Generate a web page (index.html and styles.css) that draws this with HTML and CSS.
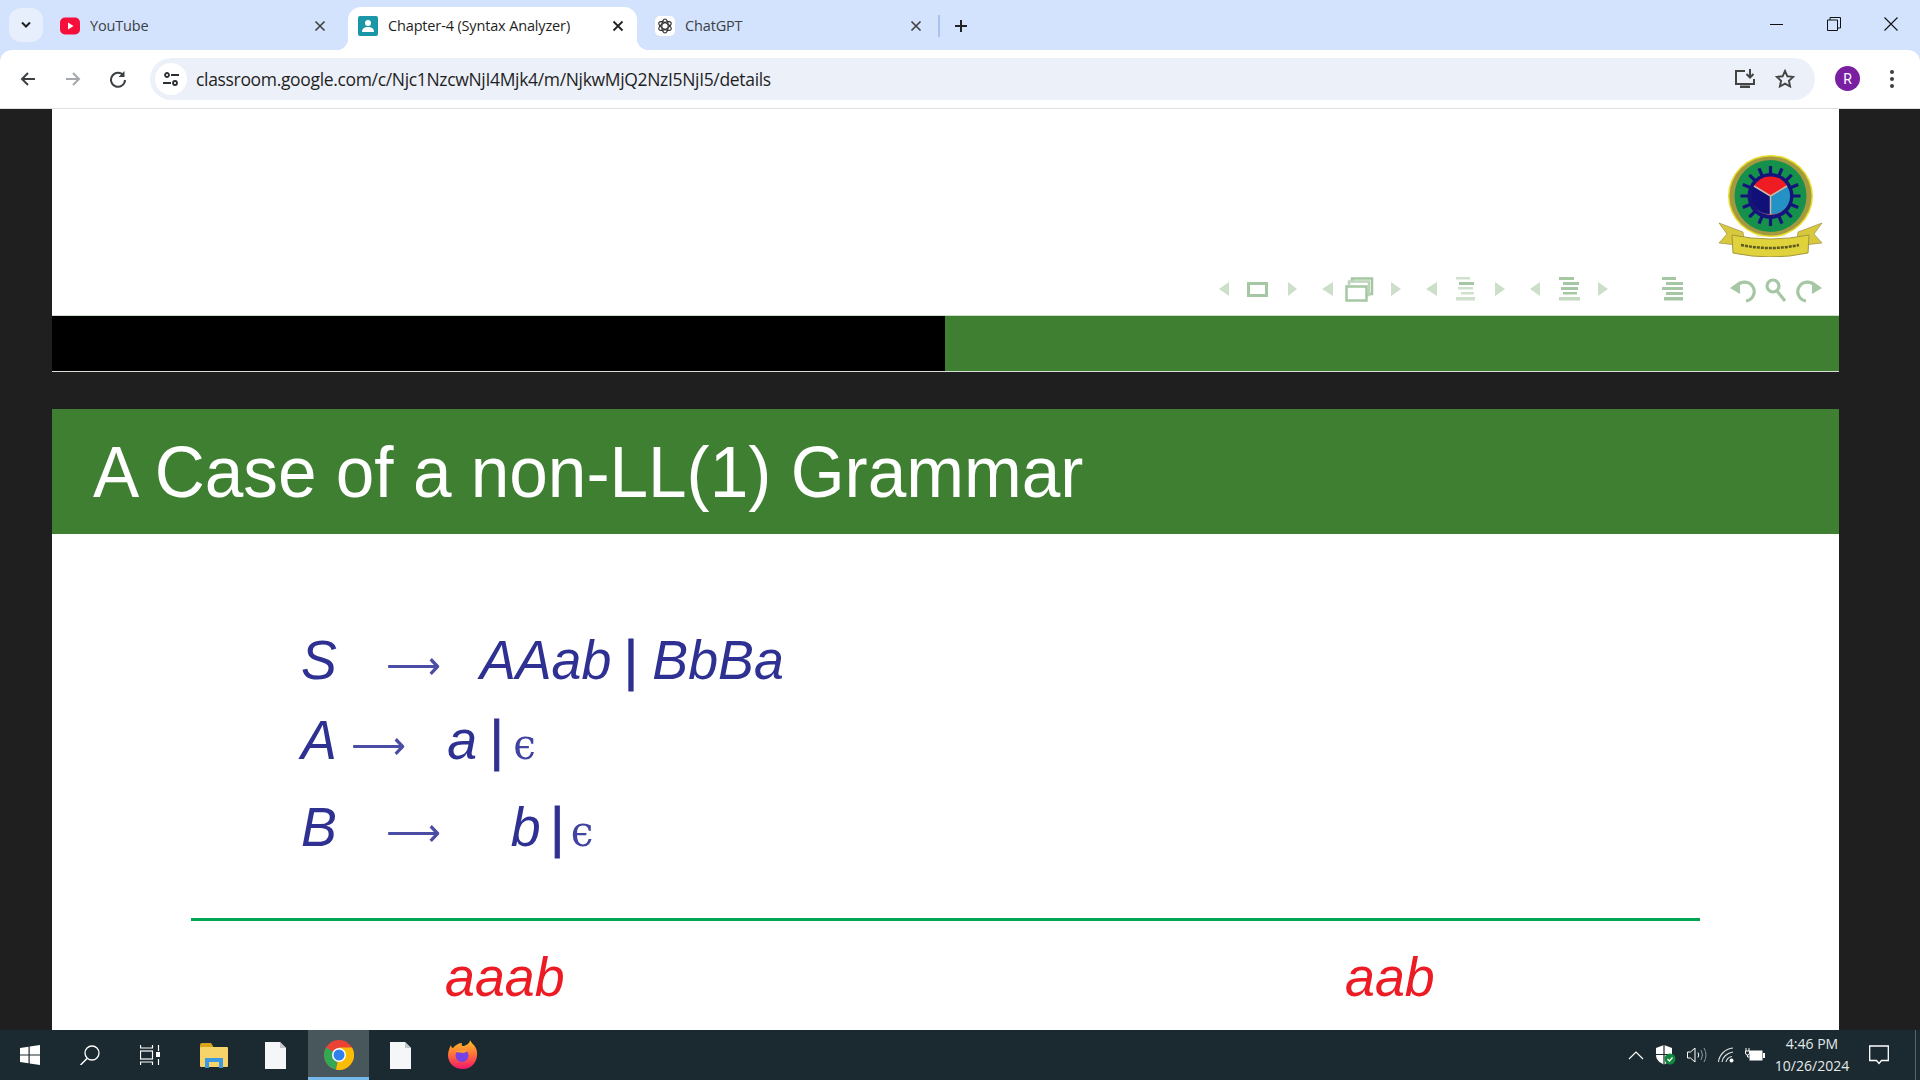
FILE: index.html
```html
<!DOCTYPE html>
<html lang="en">
<head>
<meta charset="utf-8">
<title>Chapter-4 (Syntax Analyzer)</title>
<link rel="stylesheet" href="styles.css">
</head>
<body>
<div class="browser-frame">
<header class="tabstrip">
  <button class="tab-menu"><svg width="12" height="8" viewBox="0 0 12 8"><path d="M2 1.500l4 4 4-4" fill="none" stroke="#1f1f1f" stroke-width="2"/></svg></button>
  <div class="tab tab-yt">
    <svg class="fav" width="20" height="20" viewBox="0 0 20 20"><rect y="1.500" width="20" height="17" rx="5" fill="#f70f3c"/><path d="M8 6.500l5.500 3.500-5.500 3.500z" fill="#fff"/></svg>
    <span class="tab-title">YouTube</span>
    <svg class="tab-x" width="12" height="12" viewBox="0 0 12 12"><path d="M1.500 1.500l9 9M10.500 1.500l-9 9" stroke="#444" stroke-width="1.700"/></svg>
  </div>
  <div class="tab tab-active">
    <svg class="fav" width="20" height="20" viewBox="0 0 20 20"><rect width="20" height="20" rx="2" fill="#1b95a8"/><circle cx="10" cy="7" r="3" fill="#fff"/><path d="M4 16c0-4 3-5 6-5s6 1 6 5z" fill="#fff"/></svg>
    <span class="tab-title">Chapter-4 (Syntax Analyzer)</span>
    <svg class="tab-x" width="12" height="12" viewBox="0 0 12 12"><path d="M1.500 1.500l9 9M10.500 1.500l-9 9" stroke="#222" stroke-width="1.800"/></svg>
  </div>
  <div class="tab tab-gpt">
    <span class="fav-wrap"><svg width="16" height="16" viewBox="0 0 16 16"><g fill="none" stroke="#333" stroke-width="1.200"><ellipse cx="8" cy="8" rx="3.200" ry="7"/><ellipse cx="8" cy="8" rx="3.200" ry="7" transform="rotate(60 8 8)"/><ellipse cx="8" cy="8" rx="3.200" ry="7" transform="rotate(120 8 8)"/></g></svg></span>
    <span class="tab-title">ChatGPT</span>
    <svg class="tab-x" width="12" height="12" viewBox="0 0 12 12"><path d="M1.500 1.500l9 9M10.500 1.500l-9 9" stroke="#444" stroke-width="1.700"/></svg>
  </div>
  <span class="tab-sep"></span>
  <svg class="tab-new" width="14" height="14" viewBox="0 0 14 14"><path d="M7 1v12M1 7h12" stroke="#222" stroke-width="2"/></svg>
  <div class="win-controls">
    <svg width="14" height="14" viewBox="0 0 14 14"><path d="M0 7.500h13" stroke="#111" stroke-width="1"/></svg>
    <svg width="14" height="14" viewBox="0 0 14 14"><path d="M.5 3h10v10.500h-10zM3 3V.5h10.500V11H10.500" fill="none" stroke="#111"/></svg>
    <svg width="14" height="14" viewBox="0 0 14 14"><path d="M.5.500l13 13M13.500.5l-13 13" stroke="#111" stroke-width="1.100"/></svg>
  </div>
</header>

<nav class="toolbar">
  <svg class="tool tool-back" width="18" height="18" viewBox="0 0 18 18"><path d="M16 9H3M9 3L3 9l6 6" fill="none" stroke="#3c4043" stroke-width="2"/></svg>
  <svg class="tool tool-fwd" width="18" height="18" viewBox="0 0 18 18"><path d="M2 9h13M9 3l6 6-6 6" fill="none" stroke="#a4a7ab" stroke-width="2"/></svg>
  <svg class="tool tool-reload" width="18" height="18" viewBox="0 0 18 18"><path d="M14.500 5.500A7 7 0 1 0 16 10" fill="none" stroke="#3c4043" stroke-width="2"/><path d="M15.500 1v6h-6z" fill="#3c4043"/></svg>
  <div class="omnibox">
    <span class="site-chip"><svg width="18" height="18" viewBox="0 0 18 18"><g fill="none" stroke="#2b2f33" stroke-width="1.800"><circle cx="5" cy="5" r="2"/><path d="M9 5h8M1 13h8"/><circle cx="13" cy="13" r="2"/></g></svg></span>
    <span class="url">classroom.google.com/c/Njc1NzcwNjI4Mjk4/m/NjkwMjQ2NzI5NjI5/details</span>
    <svg class="omni-install" width="22" height="20" viewBox="0 0 22 20"><path d="M11 2H2v13h18v-5" fill="none" stroke="#444" stroke-width="2"/><path d="M16 0v8M12.500 5l3.500 3.500L19.500 5" fill="none" stroke="#444" stroke-width="2"/><path d="M6 16.500h10V19H6z" fill="#444"/></svg>
    <svg class="omni-star" width="20" height="20" viewBox="0 0 20 20"><path d="M10 2l2.400 5.300 5.800.6-4.300 3.900 1.200 5.700L10 14.600l-5.100 2.900 1.200-5.700L1.800 7.900l5.800-.6z" fill="none" stroke="#444" stroke-width="1.900"/></svg>
  </div>
  <span class="avatar">R</span>
  <svg class="kebab" width="6" height="20" viewBox="0 0 6 20"><g fill="#3c4043"><circle cx="3" cy="3" r="2"/><circle cx="3" cy="10" r="2"/><circle cx="3" cy="17" r="2"/></g></svg>
</nav>
</div>

<main class="viewer">
  <section class="slide-top">
    <svg class="logo" width="105" height="102" viewBox="0 0 105 102">
      <path d="M1 68l24 9 2 14-26-3 8-9zM104 68l-24 9-2 14 26-3-8-9z" fill="#d8c93c" stroke="#8d8340" stroke-width=".6"/>
      <path d="M14 80q38 8 77 0l-1 18q-37 8-75 0z" fill="#e0d23a" stroke="#a2973e"/>
      <path d="M23 90q30 6 58 0" fill="none" stroke="#5c5a24" stroke-width="2.500" stroke-dasharray="3 1"/>
      <path d="M36 70h33l-2 12H38z" fill="#f4f2d8"/>
      <ellipse cx="52.500" cy="41" rx="42.500" ry="41" fill="#e6dc2c"/>
      <ellipse cx="52.500" cy="41" rx="41" ry="39.500" fill="#a4993e"/>
      <ellipse cx="52.500" cy="41" rx="36" ry="36" fill="#15914c"/>
      <g stroke="#14147a" stroke-width="3.200">
        <path d="M52.500 11v60"/>
        <path d="M52.500 11v60" transform="rotate(22.500 52.500 41)"/>
        <path d="M52.500 11v60" transform="rotate(45 52.500 41)"/>
        <path d="M52.500 11v60" transform="rotate(67.500 52.500 41)"/>
        <path d="M52.500 11v60" transform="rotate(90 52.500 41)"/>
        <path d="M52.500 11v60" transform="rotate(112.500 52.500 41)"/>
        <path d="M52.500 11v60" transform="rotate(135 52.500 41)"/>
        <path d="M52.500 11v60" transform="rotate(157.500 52.500 41)"/>
      </g>
      <circle cx="52.500" cy="41" r="23" fill="#14147a"/>
      <circle cx="52.500" cy="41" r="19" fill="#b96a70"/>
      <path d="M52.500 41L36 31a19 19 0 0 1 33 0z" fill="#ef1c24"/>
      <path d="M52.500 41L36 31a18 18 0 0 0 16.500 28z" fill="#101078"/>
      <path d="M52.500 41L69 31a18 18 0 0 1-16.500 28z" fill="#2492c4"/>
      <path d="M52.500 41v18M52.500 41L36 31M52.500 41L69 31" stroke="#cdb7a7" stroke-width="1.500"/>
    </svg>
    <svg class="slide-nav" width="610" height="25" viewBox="0 0 610 25">
      <g fill="#cbdfc9">
        <path d="M14 5v14L4 12zM73 5l9 7-9 7zM118 5v14l-11-7zM176 5l10 7-10 7zM222 5v14l-11-7zM280 5l10 7-10 7zM325 5v14l-10-7zM383 5l10 7-10 7z"/>
      </g>
      <rect x="33.500" y="6.500" width="18" height="12" fill="#fff" stroke="#a5c7a3" stroke-width="3"/>
      <g fill="none" stroke="#a5c7a3" stroke-width="2.500">
        <path d="M137 5V1.500h20V17h-3"/><path d="M134 8V4.500h20V18h-2" stroke="#bcd5ba"/>
        <rect x="131.500" y="9.500" width="20" height="14" fill="#fff"/>
      </g>
      <g fill="#cfe1cd">
        <rect x="241" y="0" width="14" height="2.500"/><rect x="244" y="5" width="15" height="3" fill="#a5c7a3"/><rect x="243" y="10" width="15" height="2.500"/><rect x="246" y="15" width="13" height="2.500"/><rect x="241" y="20" width="19" height="3.500"/>
      </g>
      <g fill="#a5c7a3">
        <rect x="344" y="0" width="15" height="3"/><rect x="348" y="5" width="16" height="3"/><rect x="346" y="10" width="17" height="3"/><rect x="348" y="15" width="14" height="2.500"/><rect x="344" y="20" width="21" height="3.500" fill="#c3d9c1"/>
        <rect x="447" y="0" width="14" height="3"/><rect x="451" y="5" width="17" height="3"/><rect x="447" y="10" width="21" height="3"/><rect x="451" y="15" width="17" height="3"/><rect x="449" y="20" width="19" height="3.500"/>
      </g>
      <g fill="none" stroke="#a5c7a3" stroke-width="3.200">
        <path d="M522 9a9.500 9.500 0 1 1 9 15"/>
        <circle cx="558" cy="9" r="6"/><path d="M562 14l8 10"/>
        <path d="M600 9a9.500 9.500 0 1 0-9 15"/>
      </g>
      <path d="M515 11l10-7v13zM607 11l-10-7v13z" fill="#a5c7a3"/>
    </svg>
  </section>
  <section class="bar-row"><div class="bar-black"></div><div class="bar-green"></div></section>
  <div class="gap"></div>
  <h1 class="slide-title"><span class="title-text">A Case of a non-LL(1) Grammar</span></h1>
  <section class="slide-body">
    <div class="rules">
      <div class="rule"><i class="nt">S</i><span class="arrow arrow-s">⟶</span><i class="nt rhs-s">AAab</i><span class="pipe pipe-s">|</span><i class="nt">BbBa</i></div>
      <div class="rule rule-a"><i class="nt">A</i><span class="arrow arrow-a">⟶</span><i class="nt rhs-a">a</i><span class="pipe pipe-a">|</span><span class="eps">ϵ</span></div>
      <div class="rule rule-b"><i class="nt">B</i><span class="arrow arrow-s">⟶</span><i class="nt rhs-b">b</i><span class="pipe pipe-b">|</span><span class="eps">ϵ</span></div>
    </div>
    <hr class="divider">
    <div class="examples"><i class="ex ex-left">aaab</i><i class="ex ex-right">aab</i></div>
  </section>
</main>

<footer class="taskbar">
  <svg class="tb-win" width="20" height="20" viewBox="0 0 20 20"><path d="M0 3l8.500-1.200v7.700H0zM9.700 1.600L20 0v9.500H9.700zM0 10.500h8.500v7.700L0 17zM9.700 10.500H20V20L9.700 18.400z" fill="#fff"/></svg>
  <svg class="tb-search" width="20" height="20" viewBox="0 0 20 20"><circle cx="12" cy="8" r="7" fill="none" stroke="#fff" stroke-width="1.300"/><path d="M7 13.500L.5 20" stroke="#fff" stroke-width="1.500"/></svg>
  <svg class="tb-view" width="20" height="20" viewBox="0 0 20 20"><g fill="none" stroke="#fff" stroke-width="1.200"><path d="M.5 0v3h12V0M.5 20v-3h12v3"/><rect x=".5" y="6" width="12" height="8"/><path d="M18.500 0v6M18.500 14v6"/></g><rect x="16" y="7" width="5" height="5" fill="#fff"/></svg>
  <svg class="tb-folder" width="28" height="25" viewBox="0 0 28 25"><path d="M0 2q0-2 2-2h9l2 3v2H0z" fill="#d9a21b"/><rect y="4" width="28" height="20" rx="1" fill="#f6d469"/><path d="M5 25V15h18v10h-4v-6H9v6z" fill="#3b9ae1"/></svg>
  <svg class="tb-file" width="21" height="27" viewBox="0 0 21 27"><path d="M0 0h15l6 6v21H0z" fill="#f4f6f8"/><path d="M15 0l6 6h-6z" fill="#c4c8cc"/></svg>
  <div class="tb-chrome">
    <svg width="30" height="30" viewBox="0 0 30 30"><circle cx="15" cy="15" r="15" fill="#ea4335"/><path d="M15 15L2 7.500A15 15 0 0 0 12 29.700z" fill="#34a853"/><path d="M15 15l-3 14.700A15 15 0 0 0 28 7.500H15z" fill="#fbbc04"/><circle cx="15" cy="15" r="7" fill="#fff"/><circle cx="15" cy="15" r="5.500" fill="#2f80ed"/></svg>
  </div>
  <svg class="tb-file tb-file2" width="21" height="27" viewBox="0 0 21 27"><path d="M0 0h15l6 6v21H0z" fill="#f4f6f8"/><path d="M15 0l6 6h-6z" fill="#c4c8cc"/></svg>
  <svg class="tb-fox" width="30" height="30" viewBox="0 0 30 30"><defs><linearGradient id="fx" x1="0" y1="0" x2="0" y2="1"><stop offset="0" stop-color="#ffc226"/><stop offset=".5" stop-color="#ff7139"/><stop offset="1" stop-color="#f5156c"/></linearGradient></defs><path d="M22 0c1 3 5 5 6.500 9.500C31 18 26 29 15 29 6 29 0 23 0 15 0 11 2 7 3 5c0 2 1 3 2 3 2-3 6-5 9-5-1 2 0 3 2 3 3-1 6-3 6-6z" fill="url(#fx)"/><circle cx="14" cy="15.500" r="6.500" fill="#7542e5"/><path d="M7 12c4-4 10-4 15 0-3-1-4 0-6 1-3 0-6-1-9-1z" fill="#ff9a2e"/></svg>
  <div class="tray">
    <svg class="t-caret" width="16" height="10" viewBox="0 0 16 10"><path d="M1 9l7-7 7 7" fill="none" stroke="#fff" stroke-width="1.200"/></svg>
    <svg class="t-shield" width="20" height="20" viewBox="0 0 20 20"><path d="M8 0l8 3v7c0 5-4 8-8 9.500C4 18 0 15 0 10V3z" fill="#fff"/><path d="M8 0v19.500M0 9.500h16" stroke="#1a2a30" stroke-width="1.200"/><circle cx="14" cy="14" r="5.500" fill="#10893e"/><path d="M11.500 14l2 2 3-3.500" fill="none" stroke="#fff" stroke-width="1.200"/></svg>
    <svg class="t-vol" width="20" height="18" viewBox="0 0 20 18"><path d="M.5 6h3L8 2v14l-4.500-4h-3z" fill="none" stroke="#fff"/><path d="M11 6.500q1.500 2.500 0 5" fill="none" stroke="#fff"/><path d="M14 4q3 5 0 10M17 2q4 7 0 14" fill="none" stroke="#8d979b"/></svg>
    <svg class="t-wifi" width="16" height="16" viewBox="0 0 16 16"><path d="M.5 15C1 8 7 2 15 1M4 15c.500-5 5-9 11-10M8 15c.500-2.500 3-5 6-5.500" fill="none" stroke="#dfe3e4" stroke-width="1.100"/><circle cx="13.500" cy="13.500" r="2" fill="#fff"/></svg>
    <svg class="t-batt" width="20" height="14" viewBox="0 0 20 14"><path d="M1 0v3M4 0v3M.5 3h4v2a2 2 0 0 1-4 0z" fill="none" stroke="#fff"/><path d="M2.500 7v2h2" fill="none" stroke="#fff"/><rect x="4.500" y="2.500" width="13" height="10" fill="#fff"/><rect x="18" y="5" width="2" height="5" fill="#fff"/></svg>
    <div class="clock"><span>4:46 PM</span><span>10/26/2024</span></div>
    <svg class="t-notif" width="20" height="20" viewBox="0 0 20 20"><path d="M.7 1h18.600v14.500h-6.800L10 18.500l-2.500-3H.7z" fill="none" stroke="#fff" stroke-width="1.300"/></svg>
    <span class="t-desk"></span>
  </div>
</footer>
</body>
</html>
```

FILE: styles.css
```css
* { box-sizing: border-box; }
html, body { margin: 0; height: 100%; }
body {
  width: 1920px; height: 1080px; overflow: hidden;
  display: flex; flex-direction: column;
  font-family: "Open Sans", "Noto Sans", sans-serif;
  background: #1f1f1f;
}

/* browser chrome */
.browser-frame { flex: none; background: #d3e3fd; }
.tabstrip {
  height: 50px; display: flex; align-items: flex-end;
  background: #d3e3fd; padding-left: 9px; position: relative;
}
.tab-menu {
  width: 34px; height: 34px; margin: 0 7px 8px 0; padding: 0; border: 0; border-radius: 12px;
  background: #e8effc; display: flex; align-items: center; justify-content: center;
}
.tab {
  height: 43px; display: flex; align-items: center; color: #3c4043;
  font-size: 14.5px; position: relative;
}
.tab-yt { width: 285px; padding: 0 9px 6px 10px; margin-right: 13px; }
.tab-active { width: 289px; padding: 0 13px 6px 10px; background: #fff; color: #1f1f1f; border-radius: 13px 13px 0 0; margin-right: 12px; }
.tab-active::before, .tab-active::after { content: ""; position: absolute; bottom: 0; width: 12px; height: 12px; }
.tab-active::before { left: -12px; background: radial-gradient(circle at 0 0, transparent 12px, #fff 12.500px); }
.tab-active::after { right: -12px; background: radial-gradient(circle at 100% 0, transparent 12px, #fff 12.500px); }
.tab-gpt { width: 277px; padding: 0 4px 6px 6px; }
.fav { flex: none; }
.fav-wrap { width: 20px; height: 20px; background: #fff; border-radius: 5px; display: flex; align-items: center; justify-content: center; flex: none; }
.tab-title { flex: 1; margin-left: 10px; letter-spacing: -.15px; white-space: nowrap; }
.tab-sep { width: 2px; height: 22px; background: #a9c3ec; margin: 0 14px 13px 12px; }
.tab-new { margin: 0 0 17px 0; }
.win-controls { position: absolute; right: 22px; top: 17px; display: flex; gap: 43px; }

.toolbar {
  height: 59px; background: #fff; display: flex; align-items: center;
  border-bottom: 1px solid #dcdfe3; border-radius: 12px 12px 0 0; padding-bottom: 1px;
}
.tool { flex: none; }
.tool-back { margin-left: 19px; }
.tool-fwd { margin-left: 27px; }
.tool-reload { margin-left: 27px; }
.omnibox {
  width: 1665px; height: 42px; margin-left: 23px; background: #ecf0f9; border-radius: 21px;
  display: flex; align-items: center; padding: 0 20px 0 5px; color: #1f1f1f;
}
.site-chip { width: 32px; height: 32px; border-radius: 50%; background: #fff; display: flex; align-items: center; justify-content: center; flex: none; }
.url { flex: 1; margin-left: 9px; font-size: 17.500px; letter-spacing: -.33px; white-space: nowrap; }
.omni-install { margin-right: 19px; }
.avatar {
  width: 25px; height: 25px; margin-left: 20px; border-radius: 50%; background: #7b1fa2; color: #fff;
  font: 14px "Roboto", sans-serif; display: flex; align-items: center; justify-content: center; flex: none;
}
.kebab { margin-left: 29px; }

/* pdf viewer */
.viewer { flex: 1; min-height: 0; width: 1787px; margin-left: 52px; display: flex; flex-direction: column; overflow: hidden; }
.slide-top { height: 206px; flex: none; background: #fff; display: flex; flex-direction: column; align-items: flex-end; padding: 46px 14px 0 0; filter: blur(.5px); }
.logo { display: block; margin-right: 2px; }
.slide-nav { display: block; margin-top: 20px; overflow: visible; }
.bar-row { height: 57px; flex: none; display: flex; border-bottom: 1px solid #d7dfd5; border-top: 1px solid #cfdccd; }
.bar-black { width: 893px; background: #000; }
.bar-green { flex: 1; background: #3f7f31; }
.gap { height: 37px; flex: none; }
.slide-title {
  height: 125px; flex: none; margin: 0; padding: 2px 0 0 41px; background: #3f7f31; color: #fff;
  font: 400 72px/123px "Liberation Sans", Arial, sans-serif;
}
.title-text { display: inline-block; transform: scaleX(.963); transform-origin: left; white-space: nowrap; filter: blur(.3px); }
.slide-body { flex: 1; background: #fff; padding-top: 92px; color: #2e3192; }
.rules { padding-left: 249px; filter: blur(.5px); }
.rule { display: flex; align-items: baseline; height: 80px; font: 56px/68px "Liberation Sans", Arial, sans-serif; transform: scaleX(.96); transform-origin: left; }
.rule-b { height: 87px; padding-top: 7px; }
.nt { font-style: italic; }
.arrow { display: inline-block; width: 56px; text-align: left; font: 300 40px/68px "DejaVu Sans", sans-serif; color: #4a4da3; }
.arrow-s { margin-left: 51px; }
.arrow-a { margin-left: 15px; }
.rhs-s { margin-left: 42px; }
.rhs-a { margin-left: 44px; }
.rhs-b { margin-left: 74px; }
.pipe { font: 400 56px/68px "Liberation Sans", sans-serif; -webkit-text-stroke: .8px #2e3192; }
.pipe-s { margin: 0 15px 0 13px; }
.pipe-a { margin: 0 10px 0 13px; }
.pipe-b { margin: 0 7px 0 10px; }
.eps { font: 42px/68px "DejaVu Serif", serif; color: #4043a0; }
.divider { width: 1509px; height: 3px; margin: 45px 0 0 139px; border: 0; background: #00a651; }
.examples { display: flex; padding: 22px 0 0 393px; filter: blur(.4px); }
.ex { font: italic 56px/68px "Liberation Sans", sans-serif; color: #ed1c24; transform: scaleX(.96); transform-origin: left; }
.ex-right { margin-left: 775px; }

/* taskbar */
.taskbar { height: 50px; flex: none; background: #1a2a30; display: flex; align-items: center; position: relative; }
.tb-win { margin-left: 20px; }
.tb-search { margin-left: 40px; }
.tb-view { margin-left: 40px; }
.tb-folder { margin-left: 40px; }
.tb-file { margin-left: 37px; }
.tb-chrome { width: 61px; height: 50px; margin-left: 22px; background: #47575c; border-bottom: 3px solid #76b9ed; display: flex; align-items: center; justify-content: center; padding-top: 3px; }
.tb-file2 { margin-left: 21px; }
.tb-fox { margin-left: 37px; }
.tray { margin-left: auto; height: 50px; display: flex; align-items: center; color: #fff; }
.t-caret { margin-right: 12px; }
.t-shield { margin-right: 11px; }
.t-vol { margin-right: 11px; }
.t-wifi { margin-right: 11px; }
.clock { width: 92px; margin-left: 1px; display: flex; flex-direction: column; align-items: center; font: 14px/22px "Open Sans", sans-serif; color: #e6e9ea; }
.t-notif { margin: 0 26px 0 11px; }
.t-desk { width: 1px; height: 50px; background: #56656a; margin-right: 4px; }
```
